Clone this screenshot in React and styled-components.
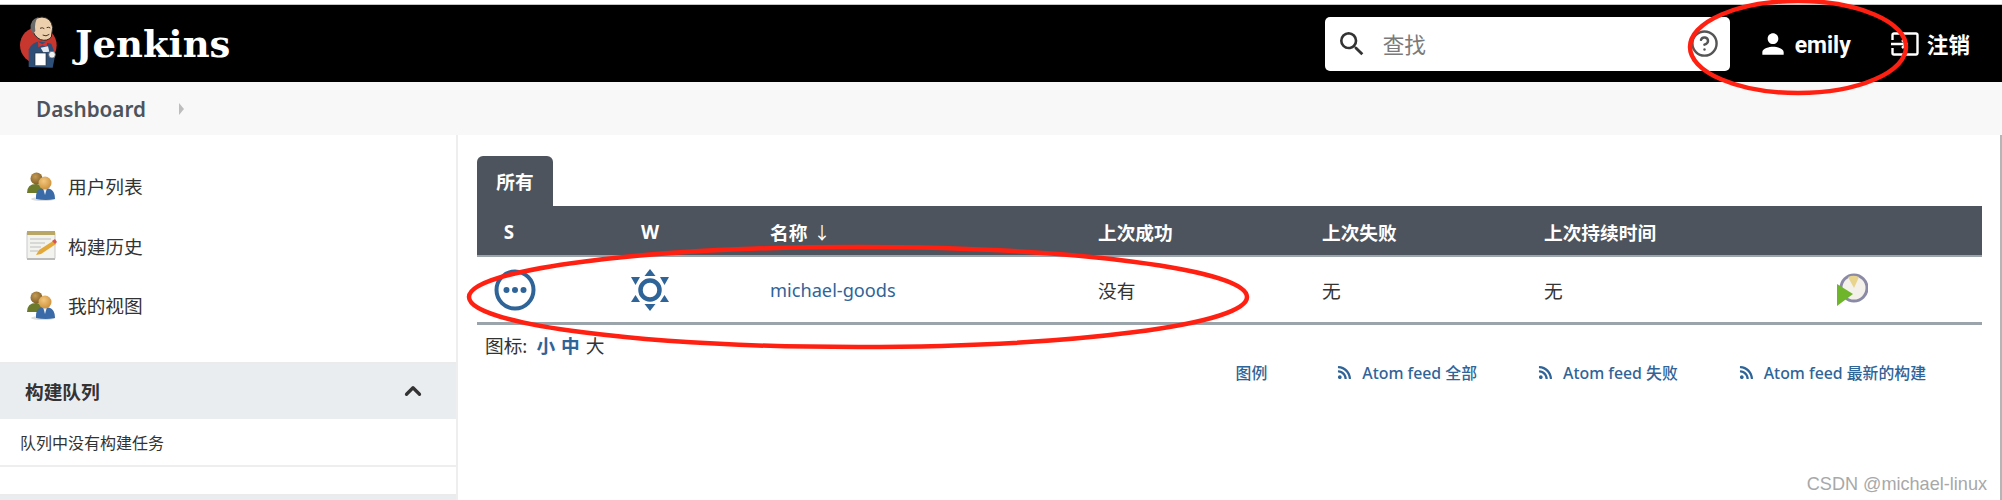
import React from 'react'
import styled, { createGlobalStyle } from 'styled-components'
import { CircleHelp, ChevronUp } from 'lucide-react'
import { FaRss } from 'react-icons/fa'

const GlobalStyle = createGlobalStyle`
    html, body {
        margin: 0;
        padding: 0;
        background: #fff;
    }
    body {
        font-family: "Noto Sans", "Noto Sans CJK SC", sans-serif;
        color: #333;
        overflow: hidden;
    }
`

const CJK = `"Noto Sans", "Noto Sans CJK SC", sans-serif`
const BLUE = '#2f6498'
const SLATE = '#4d545d'
const COLUMNS = '64px 218px 328px 224px 222px 303px 1fr'

const Page = styled.div`
    position: relative;
    width: 2002px;
    height: 500px;
    overflow: hidden;
    padding-top: 5px;
    box-sizing: border-box;
`

const Header = styled.header`
    display: flex;
    align-items: center;
    height: 77px;
    background: #000;
    color: #fff;
    padding-left: 19px;
    padding-right: 32px;
    box-shadow: 0 -1px 0 #c4c4c4;
`

const Brand = styled.div`
    display: flex;
    align-items: center;
    gap: 16px;
    flex: 1;
`

const BrandName = styled.span`
    font-family: "DejaVu Serif", serif;
    font-weight: 700;
    font-size: 37px;
`

const Search = styled.div`
    display: flex;
    align-items: center;
    width: 405px;
    height: 54px;
    box-sizing: border-box;
    padding: 0 11px 0 11px;
    background: #fff;
    border-radius: 5px;
`

const SearchText = styled.span`
    flex: 1;
    margin-left: 15px;
    font-size: 21.6px;
    color: #7a7a7a;
`

const HeaderLink = styled.div`
    display: flex;
    align-items: center;
    font-weight: 700;
    color: #fff;
    font-family: ${CJK};
    font-size: 21.6px;
    margin-left: ${p => p.$offset}px;
    gap: ${p => p.$gap}px;
`

const UserName = styled.span`
    font-family: Roboto, sans-serif;
    font-size: 23px;
    margin-top: 3px;
`

const Crumbs = styled.nav`
    display: flex;
    align-items: center;
    height: 53px;
    background: #f8f8f8;
    padding-left: 36px;
`

const CrumbText = styled.span`
    font-weight: 600;
    font-size: 20.7px;
    color: ${SLATE};
`

const CrumbArrow = styled.span`
    margin-left: 33px;
    border-left: 5px solid #bdbdbd;
    border-top: 6px solid transparent;
    border-bottom: 6px solid transparent;
`

const Main = styled.div`
    display: grid;
    grid-template-columns: 458px 1fr;
    height: 365px;
    border-right: 2px solid #b5b5b5;
`

const Sidebar = styled.aside`
    border-right: 2px solid #eeeeee;
`

const TaskList = styled.ul`
    list-style: none;
    margin: 0;
    padding: 21px 0 0 26px;
    height: 227px;
    box-sizing: border-box;
`

const Task = styled.li`
    display: flex;
    align-items: center;
    gap: 11px;
    height: 59.5px;
    font-size: 18.7px;
    color: #333;
`

const QueueHeader = styled.div`
    display: flex;
    align-items: center;
    justify-content: space-between;
    box-sizing: border-box;
    height: 57px;
    border-top: 2px solid #ebebeb;
    background: #eaedf0;
    padding: 0 30px 2px 25px;
    font-size: 18.7px;
    font-weight: 700;
    color: #333;
`

const QueueEmpty = styled.div`
    display: flex;
    align-items: center;
    height: 46px;
    padding-left: 20px;
    font-size: 16px;
    color: #333;
    border-bottom: 2px solid #eeeeee;
`

const QueueNext = styled.div`
    margin-top: 27px;
    height: 5px;
    border-top: 2px solid #ebebeb;
    background: #eaedf0;
`

const Content = styled.main`
    padding: 21px 18px 0 19px;
`

const Tab = styled.div`
    display: inline-flex;
    align-items: center;
    justify-content: center;
    box-sizing: border-box;
    width: 76px;
    height: 50px;
    padding-bottom: 2px;
    background: ${SLATE};
    color: #fff;
    border-radius: 6px 6px 0 0;
    font-weight: 700;
    font-size: 18.7px;
    vertical-align: top;
`

const Row = styled.div`
    display: grid;
    grid-template-columns: ${COLUMNS};
    grid-template-rows: 1fr;
    align-items: center;
`

const HeadRow = styled(Row)`
    height: 51px;
    padding-top: 1px;
    background: ${SLATE};
    color: #fff;
    font-weight: 700;
    font-size: 18.7px;
    border-bottom: 2px solid #9ba3ab;
    box-sizing: border-box;
`

const BodyRow = styled(Row)`
    height: 68px;
    font-size: 18.7px;
    color: #333;
    border-bottom: 3px solid #9ba3ab;
    box-sizing: border-box;
`

const Cell = styled.div`
    display: flex;
    align-items: center;
    justify-content: ${p => p.$center ? 'center' : 'flex-start'};
    padding-left: ${p => p.$center ? p.$nudge || 0 : 11}px;
`

const ActionCell = styled(Cell)`
    padding-left: 0;
`

const SortArrow = styled.span`
    margin-left: 6px;
    font-weight: 400;
    font-size: 17px;
`

const JobLink = styled.a`
    color: ${BLUE};
    font-size: 18.2px;
    font-weight: 400;
`

const SizeRow = styled.div`
    display: flex;
    gap: 6px;
    margin-top: 7px;
    padding-left: 8px;
    font-size: 18.7px;
    line-height: 28px;
`

const SizeLabel = styled.span`
    margin-right: 3px;
`

const SizeLink = styled.span`
    color: ${p => p.$active ? BLUE : '#333'};
    font-weight: ${p => p.$active ? 700 : 400};
`

const Links = styled.div`
    display: flex;
    justify-content: flex-end;
    align-items: center;
    margin-top: 1px;
    padding-right: 56px;
    gap: 61px;
    font-size: 15.85px;
    font-weight: 500;
    color: ${BLUE};
`

const FeedLink = styled.span`
    display: flex;
    align-items: center;
    gap: 10px;
`

const LegendLink = styled.span`
    margin-right: 9px;
`

const Watermark = styled.div`
    position: absolute;
    right: 15px;
    bottom: 5px;
    font-family: "Liberation Sans", sans-serif;
    font-size: 18.1px;
    color: #a8a8a8;
`

const Scribbles = styled.svg`
    position: absolute;
    left: 0;
    top: 0;
    pointer-events: none;
`

const JenkinsLogo = () => (
    <svg width="40" height="55" viewBox="27 25 120 165">
        <circle cx="85" cy="113" r="55" fill="#c8372e" />
        <path d="M56 178 L56 125 Q70 98 96 102 L124 108 L136 140 L128 180 Z" fill="#2e5078" />
        <path d="M64 58 Q66 30 96 28 Q124 30 128 60 L124 88 Q112 102 92 96 Q72 88 64 58 Z" fill="#ecd0ae" stroke="#262626" strokeWidth="3" />
        <path d="M62 66 Q58 36 84 29 Q72 44 76 70 L70 78 Z" fill="#6a6a6a" />
        <path d="M90 62 Q97 58 103 63 M110 60 Q116 57 121 61 M98 82 Q108 88 118 80" stroke="#4a3325" strokeWidth="3" fill="none" />
        <path d="M84 102 L97 110 L112 101 L110 117 L97 113 L85 119 Z" fill="#d8332c" />
        <path d="M92 120 L114 116 L118 132 L100 134 Z" fill="#e2e8ee" />
        <rect x="75" y="136" width="33" height="38" rx="2" fill="#fff" stroke="#2a2a2a" strokeWidth="2" />
        <circle cx="126" cy="141" r="10" fill="#f1f1f1" stroke="#555" strokeWidth="2" />
    </svg>
)

const SearchIcon = () => (
    <svg width="32" height="32" viewBox="0 0 24 24" fill="#333">
        <path d="M15.500 14h-.79l-.28-.27A6.470 6.470 0 0 0 16 9.500 6.500 6.500 0 1 0 9.500 16c1.610 0 3.090-.59 4.230-1.570l.27.28v.79l5 4.990L20.490 19l-4.990-5zm-6 0C7.010 14 5 11.990 5 9.500S7.010 5 9.500 5 14 7.010 14 9.500 11.990 14 9.500 14z" />
    </svg>
)

const UserIcon = () => (
    <svg width="32" height="32" viewBox="0 0 24 24" fill="#fff">
        <path d="M12 12c2.210 0 4-1.790 4-4s-1.790-4-4-4-4 1.790-4 4 1.790 4 4 4zm0 2c-2.670 0-8 1.340-8 4v2h16v-2c0-2.660-5.330-4-8-4z" />
    </svg>
)

const LogoutIcon = () => (
    <svg width="28" height="24" viewBox="0 0 28 24" fill="none" stroke="#fff" strokeWidth="2.400">
        <path d="M1.500 8V3a1.500 1.500 0 0 1 1.500-1.500h22a1.500 1.500 0 0 1 1.500 1.500v18a1.500 1.500 0 0 1-1.500 1.500H3A1.500 1.500 0 0 1 1.500 21v-5" />
        <path d="M0 12h15M11 8l4.500 4-4.500 4" />
    </svg>
)

const PeopleIcon = () => (
    <svg width="31" height="30" viewBox="0 0 31 30">
        <defs>
            <radialGradient id="headBack" cx="0.4" cy="0.35" r="0.7">
                <stop offset="0" stopColor="#c49a55" />
                <stop offset="1" stopColor="#7b5a24" />
            </radialGradient>
            <radialGradient id="headFront" cx="0.4" cy="0.35" r="0.7">
                <stop offset="0" stopColor="#f3c77f" />
                <stop offset="1" stopColor="#cc8f37" />
            </radialGradient>
        </defs>
        <ellipse cx="17" cy="28" rx="12" ry="2" fill="#ddd" />
        <path d="M1 22 Q1 13 10 13 Q18 13 18 22 Z" fill="#6c7a2b" />
        <circle cx="10.500" cy="7.500" r="6" fill="url(#headBack)" />
        <path d="M10 28 Q9 17 19 17 Q29 17 29 28 Q20 30 10 28 Z" fill="#3a6aa8" />
        <path d="M17 17 L19 24 L21 17 Z" fill="#e9eef4" />
        <circle cx="19" cy="12" r="6.500" fill="url(#headFront)" />
    </svg>
)

const NotepadIcon = () => (
    <svg width="31" height="31" viewBox="0 0 31 31">
        <rect x="1" y="2" width="28" height="27" rx="1" fill="#f2f2ee" stroke="#c9c9c9" />
        <rect x="1" y="1" width="28" height="4" fill="#b9a765" />
        <path d="M4 9h21M4 13h15M4 17h11M4 21h8" stroke="#cfcfcf" strokeWidth="1.500" />
        <path d="M10 25 L13 20 L27 11 L30 14 L15 24 Z" fill="#e2a93a" />
        <path d="M26 11 L29 9 L31 12 L29 14 Z" fill="#d9534f" />
        <rect x="1" y="28" width="28" height="2" fill="#bbb" />
    </svg>
)

const StatusIcon = () => (
    <svg width="42" height="42" viewBox="0 0 42 42" fill="none">
        <circle cx="21" cy="21" r="18.500" stroke={BLUE} strokeWidth="4" />
        <circle cx="12.500" cy="21" r="3" fill={BLUE} />
        <circle cx="21" cy="21" r="3" fill={BLUE} />
        <circle cx="29.500" cy="21" r="3" fill={BLUE} />
    </svg>
)

const WeatherIcon = () => (
    <svg width="40" height="44" viewBox="0 0 40 44" fill={BLUE}>
        <circle cx="20" cy="22" r="9.500" fill="none" stroke={BLUE} strokeWidth="4.500" />
        <path d="M20 1 L25.500 8 H14.500 Z" />
        <path d="M20 43 L25.500 36 H14.500 Z" />
        <path d="M1 9 H10 L5.500 17 Z" />
        <path d="M39 9 H30 L34.500 17 Z" />
        <path d="M1 34 H10 L5.500 27 Z" />
        <path d="M39 34 H30 L34.500 27 Z" />
    </svg>
)

const BuildIcon = () => (
    <svg width="32" height="34" viewBox="0 0 32 34">
        <circle cx="18" cy="15" r="13" fill="#f3f1ea" stroke="#8b8aa6" strokeWidth="3" />
        <path d="M18 15 L12 4 A13 13 0 0 1 23 4 Z" fill="#e8d48c" />
        <path d="M1 11 L17 21 L1 33 Z" fill="#6eb52c" />
    </svg>
)

const App = () => {
    return (
        <Page>
            <GlobalStyle />
            <Header>
                <Brand>
                    <JenkinsLogo />
                    <BrandName>Jenkins</BrandName>
                </Brand>
                <Search>
                    <SearchIcon />
                    <SearchText>查找</SearchText>
                    <CircleHelp size={29} color="#555" strokeWidth={2} />
                </Search>
                <HeaderLink $offset={27} $gap={6}>
                    <UserIcon />
                    <UserName>emily</UserName>
                </HeaderLink>
                <HeaderLink $offset={40} $gap={8}>
                    <LogoutIcon />
                    注销
                </HeaderLink>
            </Header>
            <Crumbs>
                <CrumbText>Dashboard</CrumbText>
                <CrumbArrow />
            </Crumbs>
            <Main>
                <Sidebar>
                    <TaskList>
                        <Task><PeopleIcon />用户列表</Task>
                        <Task><NotepadIcon />构建历史</Task>
                        <Task><PeopleIcon />我的视图</Task>
                    </TaskList>
                    <QueueHeader>
                        构建队列
                        <ChevronUp size={26} strokeWidth={3} color="#333" />
                    </QueueHeader>
                    <QueueEmpty>队列中没有构建任务</QueueEmpty>
                    <QueueNext />
                </Sidebar>
                <Content>
                    <Tab>所有</Tab>
                    <HeadRow>
                        <Cell $center>S</Cell>
                        <Cell $center>W</Cell>
                        <Cell>名称<SortArrow>↓</SortArrow></Cell>
                        <Cell>上次成功</Cell>
                        <Cell>上次失败</Cell>
                        <Cell>上次持续时间</Cell>
                    </HeadRow>
                    <BodyRow>
                        <Cell $center $nudge={12}><StatusIcon /></Cell>
                        <Cell $center><WeatherIcon /></Cell>
                        <Cell><JobLink>michael-goods</JobLink></Cell>
                        <Cell>没有</Cell>
                        <Cell>无</Cell>
                        <Cell>无</Cell>
                        <ActionCell><BuildIcon /></ActionCell>
                    </BodyRow>
                    <SizeRow>
                        <SizeLabel>图标:</SizeLabel>
                        <SizeLink $active>小</SizeLink>
                        <SizeLink $active>中</SizeLink>
                        <SizeLink>大</SizeLink>
                    </SizeRow>
                    <Links>
                        <LegendLink>图例</LegendLink>
                        <FeedLink><FaRss size={15} />Atom feed 全部</FeedLink>
                        <FeedLink><FaRss size={15} />Atom feed 失败</FeedLink>
                        <FeedLink><FaRss size={15} />Atom feed 最新的构建</FeedLink>
                    </Links>
                </Content>
            </Main>
            <Scribbles width="2002" height="500" viewBox="0 0 2002 500" fill="none" stroke="#ff2012" strokeWidth="4.500">
                <ellipse cx="858" cy="297" rx="389" ry="50" />
                <ellipse cx="1798" cy="47" rx="108" ry="46" />
            </Scribbles>
            <Watermark>CSDN @michael-linux</Watermark>
        </Page>
    )
}

export default App
